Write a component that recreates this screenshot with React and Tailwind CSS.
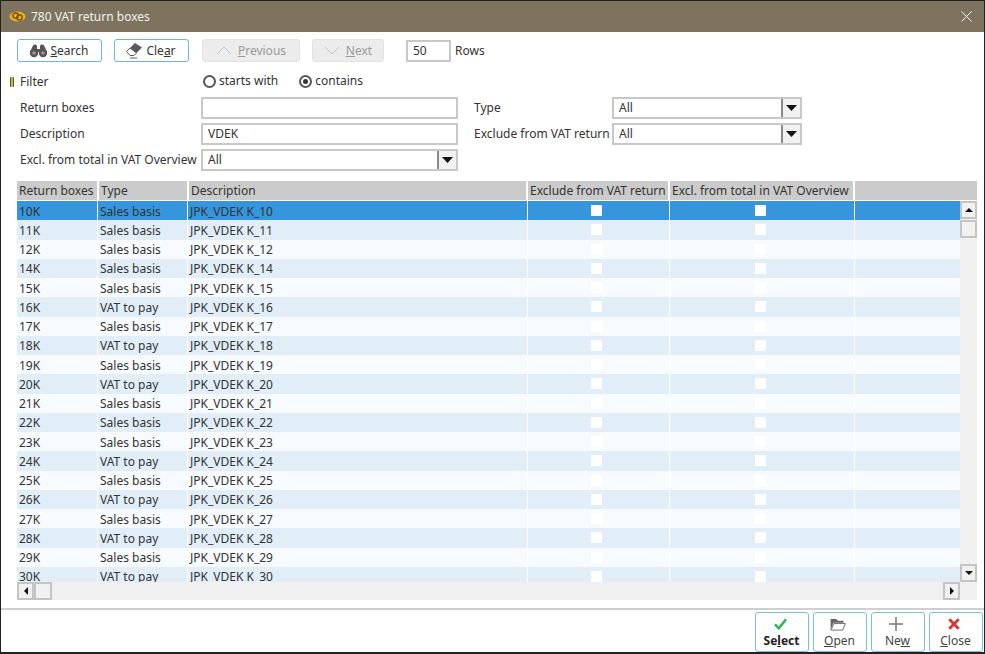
import React from 'react'

const rows = [
  ['10K', 'S'], ['11K', 'S'], ['12K', 'S'], ['14K', 'S'], ['15K', 'S'],
  ['16K', 'V'], ['17K', 'S'], ['18K', 'V'], ['19K', 'S'], ['20K', 'V'],
  ['21K', 'S'], ['22K', 'S'], ['23K', 'S'], ['24K', 'V'], ['25K', 'S'],
  ['26K', 'V'], ['27K', 'S'], ['28K', 'V'], ['29K', 'S'], ['30K', 'V'],
]

const Arrow = ({ dir }) => {
  const pts = {
    up: '1,7 9,7 5,3',
    down: '1,3 9,3 5,7',
    left: '7,1 7,9 3,5',
    right: '3,1 3,9 7,5',
  }
  return (
    <svg width="10" height="10" viewBox="0 0 10 10">
      <polygon points={pts[dir]} fill="#111" />
    </svg>
  )
}

const ScrollBtn = ({ dir }) => (
  <div className="w-[17px] h-[18px] shrink-0 flex items-center justify-center bg-[#f1f1f1] border-2 border-[#c4c4c4]">
    <Arrow dir={dir} />
  </div>
)

const Binoculars = () => (
  <svg width="19" height="15" viewBox="0 0 19 15">
    <path d="M1 9 L4 2.5 Q5 1 7 1.5 L8 3 L8 6 L11 6 L11 3 L12 1.5 Q14 1 15 2.5 L18 9 Z" fill="#555" />
    <circle cx="5" cy="10" r="4.2" fill="#555" />
    <circle cx="14" cy="10" r="4.2" fill="#555" />
    <circle cx="5" cy="10" r="1.8" fill="#999" />
    <circle cx="14" cy="10" r="1.8" fill="#999" />
  </svg>
)

const EraserIcon = () => (
  <svg width="18" height="17" viewBox="0 0 18 17">
    <path d="M5 6 L10 1 L17 5.5 L11.5 11 Z" fill="#5a5a5a" />
    <path d="M1.5 9.5 L5 6 L11.5 11 L9 13.5 L5 13.5 Z" fill="#fff" stroke="#5a5a5a" strokeWidth="1" />
    <path d="M5 16 H12" stroke="#5a5a5a" strokeWidth="1" />
  </svg>
)

const ToolBtn = ({ icon, children, w }) => (
  <button className={`${w} h-[23px] flex items-center justify-center gap-[3px] pr-[2px] bg-white border border-[#6db3e8] rounded-[3px] text-[12px] text-[#333]`}>
    {icon}
    <span>{children}</span>
  </button>
)

const DisabledBtn = ({ up, children, w }) => (
  <div className={`${w} h-[23px] flex items-center justify-center gap-[6px] bg-[#ececec] border border-[#e2e2e2] rounded-[3px] text-[12px] text-[#9a9a9a]`}>
    <svg width="16" height="9" viewBox="0 0 16 9" fill="none" stroke="#c4c4c4" strokeWidth="1">
      <path d={up ? 'M1 8 L8 1 L15 8' : 'M1 1 L8 8 L15 1'} />
    </svg>
    <span>{children}</span>
  </div>
)

const Input = ({ value, w = 'w-[257px]' }) => (
  <div className={`${w} h-[22px] flex items-center px-[4px] pl-[5px] bg-white border-2 border-[#c8c8c8] text-[12px] text-[#333]`}>
    {value}
  </div>
)

const Select = ({ w }) => (
  <div className={`${w} h-[22px] flex items-center bg-white border-2 border-[#c8c8c8] text-[12px] text-[#333]`}>
    <span className="flex-1 pl-[5px]">All</span>
    <div className="w-[19px] h-full flex items-center justify-center bg-[#f1f1f1] border-l-2 border-[#8a8a8a]">
      <svg width="11" height="6" viewBox="0 0 11 6">
        <polygon points="0,0 11,0 5.5,6" fill="#111" />
      </svg>
    </div>
  </div>
)

const Radio = ({ checked, label }) => (
  <div className="flex items-center gap-[3px] text-[12px] text-[#333]">
    <span className="w-[13px] h-[13px] rounded-full border-2 border-[#555] bg-white flex items-center justify-center">
      {checked && <span className="w-[5px] h-[5px] rounded-full bg-[#333]" />}
    </span>
    {label}
  </div>
)

const Head = ({ w, children }) => (
  <div className={`${w} h-[19px] shrink-0 flex items-center pl-[2px] bg-[#cbcbcb] text-[12px] text-[#333] whitespace-nowrap overflow-hidden`}>
    {children}
  </div>
)

const Cell = ({ w, bg, children }) => (
  <div className={`${w} h-full shrink-0 flex items-center pl-[2px] pt-[2px] border-r border-white ${bg} whitespace-nowrap overflow-hidden`}>
    {children}
  </div>
)

const CheckCell = ({ w, bg }) => (
  <div className={`${w} h-full shrink-0 flex items-center justify-center pr-[4px] border-r border-white ${bg}`}>
    <span className="w-[11px] h-[11px] bg-white" />
  </div>
)

const FootBtn = ({ icon, children, bold }) => (
  <button className="w-[54px] h-[40px] flex flex-col items-center justify-between pt-[2px] pb-[2px] pr-[1px] bg-white border border-[#7dbbea] rounded-[3px] text-[12px] leading-[16px] text-[#444]">
    <span className="h-[18px] flex items-center mr-[3px]">{icon}</span>
    <span className={bold ? 'font-bold text-[#222]' : ''}>{children}</span>
  </button>
)

const App = () => {
  return (
    <div className="w-[985px] h-[654px] flex flex-col bg-white border-t border-l border-r border-b-2 border-[#222] overflow-hidden font-['Noto_Sans','Open_Sans',sans-serif]">
      <div className="h-[31px] shrink-0 flex items-center justify-between bg-[#7d735f] pl-[8px] pr-[12px]">
        <div className="flex items-center gap-[5px] text-[12px] text-[#f4f2ee]">
          <svg width="17" height="11" viewBox="0 0 17 11" fill="none">
            <ellipse cx="8.5" cy="5.5" rx="8" ry="5" fill="#e8ae1e" />
            <circle cx="6.5" cy="4.5" r="2.6" stroke="#6b4708" strokeWidth="1.3" />
            <circle cx="10.5" cy="6.5" r="2.6" stroke="#6b4708" strokeWidth="1.3" />
          </svg>
          780 VAT return boxes
        </div>
        <svg width="11" height="11" viewBox="0 0 11 11" stroke="#fff" strokeWidth="1">
          <path d="M0.5 0.5 L10.5 10.5 M10.5 0.5 L0.5 10.5" />
        </svg>
      </div>

      <div className="flex-1 flex flex-col pl-[16px] min-h-0">
        <div className="flex items-center mt-[7px] h-[23px]">
          <ToolBtn w="w-[85px]" icon={<Binoculars />}><u>S</u>earch</ToolBtn>
          <div className="ml-[12px]">
            <ToolBtn w="w-[75px]" icon={<EraserIcon />}>Cle<u>a</u>r</ToolBtn>
          </div>
          <div className="ml-[13px]">
            <DisabledBtn up w="w-[98px]"><u>P</u>revious</DisabledBtn>
          </div>
          <div className="ml-[12px]">
            <DisabledBtn w="w-[72px]"><u>N</u>ext</DisabledBtn>
          </div>
          <div className="ml-[22px]">
            <Input w="w-[45px]" value="50" />
          </div>
          <span className="ml-[4px] text-[12px] text-[#333]">Rows</span>
        </div>

        <div className="flex items-center h-[20px] mt-[10px]">
          <span className="w-[4px] h-[10px] ml-[-7px] mr-[6px] rounded-[1px] bg-[#c9b92c] border-x border-[#555]" />
          <span className="w-[183px] text-[12px] text-[#333]">Filter</span>
          <div className="flex items-center gap-[21px] mb-[2px]">
            <Radio label="starts with" />
            <Radio checked label="contains" />
          </div>
        </div>

        <div className="flex mt-[5px]">
          <div className="flex flex-col gap-[4px]">
            {[
              ['Return boxes', <Input key="a" value="" />],
              ['Description', <Input key="b" value="VDEK" />],
              ['Excl. from total in VAT Overview', <Select key="c" w="w-[257px]" />],
            ].map(([label, field]) => (
              <div key={label} className="flex items-center h-[22px]">
                <span className="w-[184px] pl-[3px] text-[12px] text-[#333] whitespace-nowrap">{label}</span>
                {field}
              </div>
            ))}
          </div>
          <div className="flex flex-col gap-[4px] ml-[16px]">
            {['Type', 'Exclude from VAT return'].map((label) => (
              <div key={label} className="flex items-center h-[22px]">
                <span className="w-[138px] text-[12px] text-[#333] whitespace-nowrap">{label}</span>
                <Select w="w-[190px]" />
              </div>
            ))}
          </div>
        </div>

        <div className="w-[960px] mt-[10px] flex flex-col">
          <div className="flex gap-[2px] h-[19px]">
            <Head w="w-[80px]">Return boxes</Head>
            <Head w="w-[88px]">Type</Head>
            <Head w="w-[337px]">Description</Head>
            <Head w="w-[140px]">Exclude from VAT return</Head>
            <Head w="w-[183px]">Excl. from total in VAT Overview</Head>
            <Head w="w-[122px]"></Head>
          </div>
          <div className="flex h-[381px] mt-[1px]">
            <div className="w-[943px] overflow-hidden text-[12px] text-[#333]">
              {rows.map(([box, type], i) => {
                const bg = i === 0 ? 'bg-[#3596db]' : i % 2 === 1 ? 'bg-[#e1eef8]' : 'bg-[#f8fbfe]'
                return (
                  <div key={box} className="flex h-[19.25px]">
                    <Cell w="w-[81px]" bg={bg}>{box}</Cell>
                    <Cell w="w-[90px]" bg={bg}>{type === 'S' ? 'Sales basis' : 'VAT to pay'}</Cell>
                    <Cell w="w-[340px]" bg={bg}>JPK_VDEK K_{box.slice(0, 2)}</Cell>
                    <CheckCell w="w-[142px]" bg={bg} />
                    <CheckCell w="w-[185px]" bg={bg} />
                    <div className={`flex-1 h-full ${bg}`} />
                  </div>
                )
              })}
            </div>
            <div className="w-[17px] flex flex-col bg-[#f0f0f0]">
              <ScrollBtn dir="up" />
              <div className="h-[18px] w-[17px] mt-[1px] bg-[#f1f1f1] border-2 border-[#c4c4c4]" />
              <div className="flex-1" />
              <ScrollBtn dir="down" />
            </div>
          </div>
          <div className="flex h-[18px] bg-[#f0f0f0]">
            <ScrollBtn dir="left" />
            <div className="w-[18px] h-[18px] bg-[#f1f1f1] border-2 border-[#c4c4c4]" />
            <div className="flex-1" />
            <ScrollBtn dir="right" />
            <div className="w-[17px]" />
          </div>
        </div>
      </div>

      <div className="h-[44px] shrink-0 flex items-start justify-end gap-[4px] pt-[2px] pr-[1px] border-t-2 border-[#cfcfcf]">
        <FootBtn bold icon={
          <svg width="15" height="12" viewBox="0 0 16 14" fill="none" stroke="#2fb457" strokeWidth="3">
            <path d="M1.5 7.5 L6 12 L14.5 1.5" />
          </svg>
        }>Se<u>l</u>ect</FootBtn>
        <FootBtn icon={
          <svg width="18" height="13" viewBox="0 0 18 14">
            <path d="M1 13 V1 H7 L9 3 H15 V5 H4 Z" fill="#666" />
            <path d="M1.5 13 L4.5 6 H17 L14 13 Z" fill="#fff" stroke="#666" strokeWidth="1" />
          </svg>
        }><u>O</u>pen</FootBtn>
        <FootBtn icon={
          <svg width="14" height="14" viewBox="0 0 15 15" stroke="#777" strokeWidth="1.6">
            <path d="M7.5 0 V15 M0 7.5 H15" />
          </svg>
        }>Ne<u>w</u></FootBtn>
        <FootBtn icon={
          <svg width="12" height="12" viewBox="0 0 14 14" stroke="#d0392b" strokeWidth="3.4">
            <path d="M1.5 1.5 L12.5 12.5 M12.5 1.5 L1.5 12.5" />
          </svg>
        }><u>C</u>lose</FootBtn>
      </div>
    </div>
  )
}

export default App
